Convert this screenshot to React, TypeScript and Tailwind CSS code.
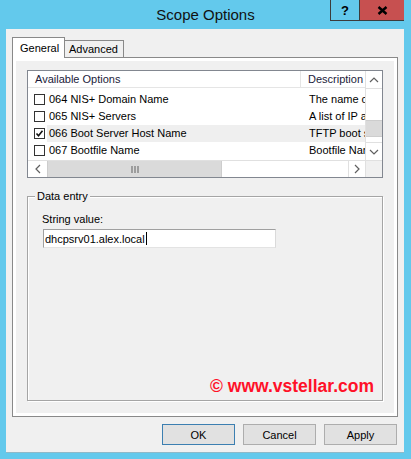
import React from 'react';

type OptionRow = {
  code: string;
  desc: string;
  checked: boolean;
  hot?: boolean;
};

const rows: OptionRow[] = [
  { code: '064 NIS+ Domain Name', desc: 'The name of the NIS+ domain', checked: false },
  { code: '065 NIS+ Servers', desc: 'A list of IP addresses indicating NIS+ servers', checked: false },
  { code: '066 Boot Server Host Name', desc: 'TFTP boot server host name', checked: true, hot: true },
  { code: '067 Bootfile Name', desc: 'Bootfile Name', checked: false },
];

function Chevron({ dir }: { dir: 'up' | 'down' | 'left' | 'right' }) {
  const points = {
    up: '1,6 5,2 9,6',
    down: '1,2 5,6 9,2',
    left: '6,1 2,5 6,9',
    right: '2,1 6,5 2,9',
  }[dir];
  const horiz = dir === 'left' || dir === 'right';
  return (
    <svg width={horiz ? 8 : 10} height={horiz ? 10 : 8} viewBox={horiz ? '0 0 8 10' : '0 0 10 8'}>
      <polyline points={points} fill="none" stroke="#606060" strokeWidth="1.2" />
    </svg>
  );
}

function CheckBox({ checked }: { checked: boolean }) {
  return (
    <div className="flex h-[11px] w-[11px] shrink-0 items-center justify-center border border-[#333333] bg-white">
      {checked && (
        <svg width="9" height="9" viewBox="0 0 9 9">
          <polyline points="1.5,4.5 3.5,6.8 7.5,1.8" fill="none" stroke="#111" strokeWidth="1.6" />
        </svg>
      )}
    </div>
  );
}

function OptionsList() {
  return (
    <div className="ml-[11px] mt-[9px] h-[108px] w-[356px] border border-[#828790] bg-white">
      <div className="grid h-full grid-cols-[337px_17px] grid-rows-[89px_17px]">
        {/* list body */}
        <div className="overflow-hidden">
          <div className="w-[460px]">
            <div className="flex h-[17px] border-b border-[#e5e5e5] leading-[16px] text-[#1b1b3a]">
              <div className="w-[273px] border-r border-[#e5e5e5] pl-[7px]">Available Options</div>
              <div className="pl-[7px]">Description</div>
            </div>
            <div className="pt-[3px]">
              {rows.map(row => (
                <div key={row.code} className="flex h-[17px] items-center leading-[17px]">
                  <div className="w-[6px] shrink-0" />
                  <CheckBox checked={row.checked} />
                  <div className={`ml-[2px] flex h-[17px] flex-1 ${row.hot ? 'bg-[#efefef]' : ''}`}>
                    <div className="w-[254px] shrink-0 pl-[2px]">{row.code}</div>
                    <div className="whitespace-nowrap pl-[8px]">{row.desc}</div>
                  </div>
                </div>
              ))}
            </div>
          </div>
        </div>

        {/* vertical scroll bar */}
        <div className="flex flex-col border-l border-[#e0e0e0] bg-white">
          <div className="flex h-[18px] items-center justify-center border-b border-[#e0e0e0]">
            <Chevron dir="up" />
          </div>
          <div className="h-[31px]" />
          <div className="h-[17px] border-y border-[#cdcdcd] bg-[#dadada]" />
          <div className="flex-1 border-b border-[#e0e0e0]" />
          <div className="flex h-[17px] items-center justify-center">
            <Chevron dir="down" />
          </div>
        </div>

        {/* horizontal scroll bar */}
        <div className="flex border-t border-[#e0e0e0] bg-white">
          <div className="flex w-[19px] items-center justify-center">
            <Chevron dir="left" />
          </div>
          <div className="flex w-[175px] items-center justify-center border-x border-[#cdcdcd] bg-[#dadada]">
            <svg width="8" height="7" viewBox="0 0 8 7">
              <path d="M1 0v7M4 0v7M7 0v7" stroke="#606060" strokeWidth="1" />
            </svg>
          </div>
          <div className="w-[126px]" />
          <div className="flex w-[17px] items-center justify-center border-l border-[#e0e0e0]">
            <Chevron dir="right" />
          </div>
        </div>

        <div className="border-l border-t border-[#e0e0e0] bg-[#f0f0f0]" />
      </div>
    </div>
  );
}

function DataEntry() {
  return (
    <div className="relative ml-[11px] mt-[18px] flex h-[205px] w-[356px] flex-col border border-[#a5a5a5] shadow-[inset_1px_1px_0_#ffffff,1px_1px_0_#ffffff]">
      <div className="absolute left-[7px] top-[-8px] bg-[#f0f0f0] px-[2px] leading-[14px]">Data entry</div>
      <div className="ml-[14px] mt-[15px] leading-[14px]">String value:</div>
      <div className="ml-[15px] mt-[3px] flex h-[19px] w-[233px] items-center border border-b-[#e3e3e3] border-l-[#a0a0a0] border-r-[#dadada] border-t-[#a0a0a0] bg-white pl-[1px]">
        <span className="leading-[14px]">dhcpsrv01.alex.local</span>
        <span className="ml-px h-[13px] w-px bg-black" />
      </div>
      <div className="mb-[4px] mr-[8px] mt-auto self-end font-['Liberation_Sans',Arial,sans-serif] text-[17.5px] font-bold leading-[20px] text-[#ff1028]">
        © www.vstellar.com
      </div>
    </div>
  );
}

function DialogButton({ label, primary }: { label: string; primary?: boolean }) {
  return (
    <div
      className={`flex h-[21px] w-[73px] items-center justify-center border bg-[#e1e1e1] leading-[14px] ${
        primary ? 'border-[#3c7fb1]' : 'border-[#adadad]'
      }`}
    >
      {label}
    </div>
  );
}

export default function App() {
  return (
    <div className="flex h-[459px] w-[411px] flex-col bg-[#63c9ec] font-['Liberation_Sans',Arial,sans-serif] text-[11px] text-black">
      {/* title bar */}
      <div className="relative flex h-[29px] shrink-0 items-center justify-center">
        <span className="text-[15px] leading-[18px] text-[#111]">Scope Options</span>
        <div className="absolute right-[7px] top-0 flex h-[21px] border-b border-l border-[#3c3c3c]">
          <div className="flex w-[28px] items-center justify-center text-[13px] font-bold leading-none">?</div>
          <div className="flex w-[45px] items-center justify-center border-l border-[#3c3c3c] bg-[#c75050]">
            <svg width="11" height="9" viewBox="0 0 11 9">
              <path d="M1.5 1l8 7M9.5 1l-8 7" stroke="#000" strokeWidth="2.4" />
            </svg>
          </div>
        </div>
      </div>

      {/* client area */}
      <div className="ml-[6px] mr-[7px] flex h-[423px] flex-col bg-[#f0f0f0] px-[6px] pt-[8px]">
        {/* tabs */}
        <div className="flex h-[20px] items-end">
          <div className="relative z-10 -mb-px flex h-[21px] w-[53px] items-center border-x border-t border-[#898989] bg-white pl-[7px] leading-[14px]">
            General
          </div>
          <div className="flex h-[17px] w-[59px] items-center border-r border-t border-[#898989] bg-[#f0f0f0] pl-[4px] leading-[14px]">
            Advanced
          </div>
        </div>

        {/* tab panel */}
        <div className="h-[360px] w-[386px] border border-[#898989] bg-white p-[3px]">
          <div className="flex h-full flex-col bg-[#f0f0f0]">
            <OptionsList />
            <DataEntry />
          </div>
        </div>

        {/* buttons */}
        <div className="mt-[7px] flex justify-end gap-[8px] pr-px">
          <DialogButton label="OK" primary />
          <DialogButton label="Cancel" />
          <DialogButton label="Apply" />
        </div>
      </div>
      <div className="h-px w-[398px] ml-[6px] bg-[#8fb9c8]" />
    </div>
  );
}
